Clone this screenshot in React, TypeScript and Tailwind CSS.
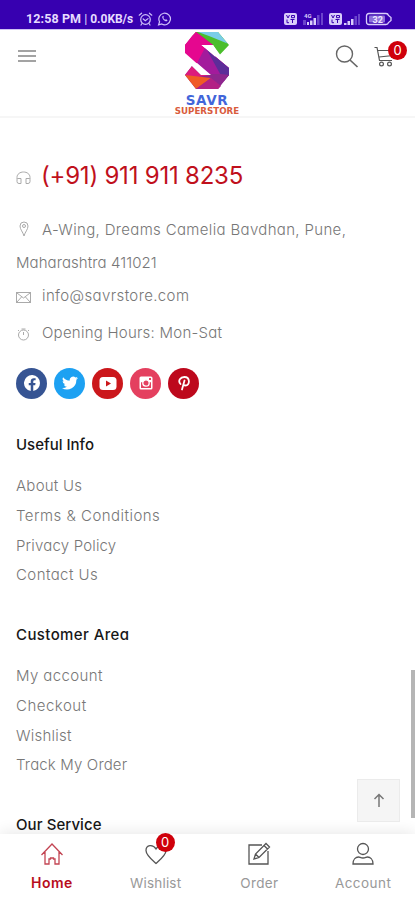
import React from "react";

const font = "font-['Inter','Liberation_Sans',sans-serif] [font-feature-settings:'cv11']";

function StatusBar() {
  return (
    <div className="flex h-[30px] shrink-0 items-start border-b border-[#cfc3f3] bg-[#3700b0] pl-[26px] pr-[22px] pt-[11px] text-[#e6dcff]">
      <span className="flex h-4 w-[110px] items-center whitespace-nowrap font-['Roboto',sans-serif] text-[12.500px] font-bold leading-4 tracking-[0.100px]">
        12:58 PM<span className="px-[3px] font-normal">|</span><span className="text-[12px] tracking-[-0.050px]">0.0KB/s</span>
      </span>
      <svg className="ml-[2px] mt-[1px]" width="15" height="14" viewBox="0 0 15 14" fill="none" stroke="#cfbffa" strokeWidth="1.2" strokeLinecap="round">
        <circle cx="7.5" cy="7.5" r="4.8" /><path d="M1.2 3.2 3.6 1.2M13.8 3.2 11.4 1.2M5.2 7l2.1 1.700L10 6.600M4 11.500 3 13M11 11.500l1 1.500" />
      </svg>
      <svg className="ml-[4px] mt-[1px]" width="15" height="14" viewBox="0 0 15 14" fill="none" stroke="#cfbffa" strokeWidth="1.2">
        <path d="m1.600 12.800 1-3A5.800 5.800 0 1 1 4.800 12z" /><path d="M5.500 4.200c-1.200 1.800 2.200 5.500 4.300 5l.8-1-1.500-1-.9.6C7.100 7.300 6.700 6.700 6.300 5.800l.6-.7-.6-1.300z" fill="#cfbffa" stroke="none" />
      </svg>
      <svg className="ml-auto mt-[1px]" width="110" height="14" viewBox="0 0 110 14">
        <g fill="#d9cdfb">
          <rect x="1" y="1" width="13" height="12" rx="2" /><rect x="46" y="1" width="13" height="12" rx="2" />
          <rect x="24" y="10" width="2" height="3" /><rect x="27" y="8.500" width="2.500" height="4.500" /><rect x="30.500" y="6" width="2.500" height="7" />
          <rect x="61" y="11" width="2.500" height="2" /><rect x="64.500" y="9" width="2.500" height="4" /><rect x="68" y="7" width="2.500" height="6" />
        </g>
        <g fill="#6b43cc"><rect x="20" y="8" width="3" height="5" /><rect x="34" y="3" width="2.500" height="10" /><rect x="38" y="1" width="2" height="12" /><rect x="71.500" y="4" width="2.500" height="9" /><rect x="75" y="2" width="2" height="11" /></g>
        <path d="M3.500 3 5 6l1.500-3M8.500 3.500h3v2.200h-3zM4 7.500v3.200h2M7.500 7.500h4M9.500 7.500v3.500M48.500 3 50 6l1.500-3M53.500 3.500h3v2.200h-3zM49 7.500v3.200h2M52.500 7.500h4M54.500 7.500v3.500" fill="none" stroke="#3700b0" strokeWidth="1" />
        <text x="21" y="5.500" fill="#d9cdfb" fontSize="6" fontWeight="700" fontFamily="Roboto">4G</text>
        <path d="M86 1.500h17q2 0 2.500 2l2.500 2v3l-2.500 2q-.5 2-2.500 2H86q-2.500 0-2.500-2.500V4q0-2.500 2.500-2.500z" fill="none" stroke="#d9cdfb" strokeWidth="1.300" />
        <rect x="86" y="3.500" width="16" height="7" rx="1" fill="#8e70da" />
        <text x="89.500" y="10.500" fill="#eee7ff" fontSize="9" fontWeight="700" fontFamily="Roboto">32</text>
      </svg>
    </div>
  );
}

function Header() {
  return (
    <header className="flex h-[88px] shrink-0 items-start border-b-2 border-[#f6f6f6] bg-white">
      <div className="flex w-[165px] flex-col gap-[3px] pl-[18px] pt-[20px]">
        <span className="h-[2px] w-[18px] bg-[#a3a3a3]" /><span className="h-[2px] w-[18px] bg-[#a3a3a3]" /><span className="h-[2px] w-[18px] bg-[#a3a3a3]" />
      </div>
      <div className="flex w-[84px] flex-col items-center pt-[2px]">
        <svg width="44" height="57" viewBox="0 0 44 57">
          <path d="M11 0h22l11 13-9 9.500L28 13H16.500L7 4.500z" fill="#4abe2c" />
          <path d="M13 0h20l9.500 11.500L24 4z" fill="#7acde8" />
          <path d="M11 0 0 13l5 3 11.500-3H28z" fill="#c2185b" />
          <path d="M11 0 28 13H16.500L44 36v7l-8 9L22 43h3L0 21v-8L7 4z" fill="#e5078f" />
          <path d="M20 16 44 36v7l-6 6L25 43 12 31z" fill="#a31b9c" />
          <path d="M22 18 44 36v7l-5 6z" fill="#5d2d99" />
          <path d="M7 34 0 43l11 14h22l11-14-8-1H16z" fill="#8e268e" />
          <path d="M7 34 0 43l8 3 17-3h-9z" fill="#dc1b7d" />
          <path d="M0 43 26 46 11 57z" fill="#f05a26" />
          <path d="m26 46-15 11h22l3-3z" fill="#b32185" />
          <path d="M16.500 13H28l6 9.500-4 2zM7 34l9 9h10L12 31z" fill="white" />
        </svg>
        <span className="mt-[6px] font-['DejaVu_Sans',sans-serif] text-[13.500px] font-bold leading-[11px] tracking-[0.600px] text-[#4266da]">SAVR</span>
        <span className="whitespace-nowrap font-['DejaVu_Sans',sans-serif] text-[8.700px] font-bold leading-[11px] text-[#d95b3c]">SUPERSTORE</span>
      </div>
      <svg className="ml-[86px] mt-[14px]" width="24" height="25" viewBox="0 0 24 25" fill="none" stroke="#666" strokeWidth="1.400"><circle cx="9.500" cy="10" r="8" /><path d="m15 16 7.500 7" strokeWidth="1.700" /></svg>
      <div className="relative ml-[15px] mt-[15px] h-6 w-8">
        <svg width="24" height="24" viewBox="0 0 24 24" fill="none" stroke="#555" strokeWidth="1.200"><path d="M.5 2.500h2.500l2.500 13H18M4 5.500h15M5 12l14-1.500V6" /><circle cx="7.500" cy="19" r="1.900" /><circle cx="15.500" cy="19" r="1.900" /></svg>
        <Badge className="-top-[4px] left-[14px]" />
      </div>
    </header>
  );
}

function Badge({ className }: { className: string }) {
  return <span className={`absolute flex size-[19px] items-center justify-center rounded-full bg-[#cf000b] text-[13px] leading-none text-white ${className}`}>0</span>;
}

function Contact() {
  const icon = { fill: "none", stroke: "#aaa", strokeWidth: 1 };
  return (
    <section className="text-[15px] font-light text-[#777]">
      <div className="flex h-[34px] items-center">
        <svg className="mt-[5px]" width="15" height="14" viewBox="0 0 15 14" {...icon}><path d="M1 8V6.500C1 3 4 1 7.500 1S14 3 14 6.500V8M1 8.500q0-1 1-1h3v5H3q-2 0-2-2zM14 8.500q0-1-1-1h-3v5h2q2 0 2-2z" /></svg>
        <span className="ml-[10px] mt-[2px] whitespace-nowrap text-[24px] font-normal leading-[34px] tracking-[-0.220px] text-[#c0101c]">(+91) 911 911 8235</span>
      </div>
      <div className="mt-[20px] leading-[33.500px]">
        <div className="flex h-[34px] items-center">
          <svg className="ml-[3px]" width="10" height="16" viewBox="0 0 10 16" {...icon}><path d="M5 15C4 11 1 8.500 1 5a4 4 0 0 1 8 0c0 3.500-3 6-4 10z" /><circle cx="5" cy="5" r="1.500" /></svg>
          <span className="ml-[13px] mt-px whitespace-nowrap tracking-[0.340px]">A-Wing, Dreams Camelia Bavdhan, Pune,</span>
        </div>
        <div className="whitespace-nowrap tracking-[0.080px]">Maharashtra 411021</div>
      </div>
      <div className="flex h-[33px] items-center">
        <svg className="mt-[3px]" width="15" height="11" viewBox="0 0 15 11" {...icon}><rect x=".5" y=".5" width="14" height="10" /><path d="m1 1 6.500 5L14 1M1 10l4.500-5M14 10 9.500 5" /></svg>
        <span className="ml-[11px] tracking-[0.380px]">info@savrstore.com</span>
      </div>
      <div className="mt-[4px] flex h-[33px] items-center">
        <svg className="ml-[1px] mt-[3px]" width="13" height="13" viewBox="0 0 13 13" {...icon}><circle cx="6.500" cy="7" r="5" /><path d="M6.500 4v3M4.500 1h4M1 3l1-1M12 3l-1-1" /></svg>
        <span className="ml-[12px] tracking-[0.240px]">Opening Hours: Mon-Sat</span>
      </div>
    </section>
  );
}

function Socials() {
  return (
    <div className="mt-[18px] flex gap-[7px] [&>span]:flex [&>span]:size-[31px] [&>span]:items-center [&>span]:justify-center [&>span]:rounded-full">
      <span className="bg-[#365493]"><svg width="16" height="16" viewBox="0 0 24 24"><path fill="white" d="M24 12a12 12 0 1 0-13.900 11.900v-8.400H7.100V12h3V9.400c0-3 1.800-4.700 4.600-4.700 1.300 0 2.700.2 2.700.2v3h-1.500c-1.500 0-2 .9-2 1.900V12h3.400l-.5 3.500h-2.900v8.400A12 12 0 0 0 24 12z" /></svg></span>
      <span className="bg-[#1da1f2]"><svg width="16" height="16" viewBox="0 0 24 24"><path fill="white" d="M24 4.600a10 10 0 0 1-2.800.8 5 5 0 0 0 2.100-2.700 10 10 0 0 1-3.100 1.200 4.900 4.900 0 0 0-8.400 4.500A14 14 0 0 1 1.700 3.200a4.900 4.900 0 0 0 1.500 6.500 5 5 0 0 1-2.200-.6 4.900 4.900 0 0 0 3.900 4.900 5 5 0 0 1-2.200.1 4.900 4.900 0 0 0 4.600 3.400A9.900 9.900 0 0 1 0 19.500a14 14 0 0 0 21.500-12.400A10 10 0 0 0 24 4.600z" /></svg></span>
      <span className="bg-[#cb171b]"><svg width="18" height="13" viewBox="0 0 18 13"><rect x=".5" width="17" height="13" rx="3.500" fill="white" /><path d="m7 3.500 5 3-5 3z" fill="#cb171b" /></svg></span>
      <span className="bg-[#e4405f]"><svg width="14" height="14" viewBox="0 0 14 14"><rect x=".5" y=".5" width="13" height="13" rx="1.500" fill="white" /><path d="M2 6.300h2.200a3 3 0 0 0 5.600 0H12V12H2z" fill="#e4405f" /><circle cx="7" cy="7" r="3.200" fill="#e4405f" stroke="white" strokeWidth="1.300" /><rect x="10" y="2" width="2" height="2" fill="#e4405f" /></svg></span>
      <span className="bg-[#bd081c]"><svg width="12" height="15" viewBox="0 0 12 15" fill="none" stroke="white" strokeWidth="1.800" strokeLinecap="round"><path d="M2.500 8C-.5 4.500 2.500 1 6.300 1 12.500 1 12 9.500 7.500 9.500 6.200 9.500 5.500 8.700 5.500 8M6.500 4.500 4 13.500" /></svg></span>
    </div>
  );
}

const TRACKING: Record<string, string> = {
  "Useful Info": "tracking-[0px]",
  "Customer Area": "tracking-[0.400px]",
  "Our Service": "tracking-[0.080px]",
  "About Us": "tracking-[0.250px]",
  "Terms & Conditions": "tracking-[0.470px]",
  "Privacy Policy": "tracking-[0.180px]",
  "Contact Us": "tracking-[0.420px]",
  "My account": "tracking-[0.400px]",
  Checkout: "tracking-[0.500px]",
  Wishlist: "tracking-[0.250px]",
  "Track My Order": "tracking-[0.150px]",
};

function Links({ title, items, className }: { title: string; items: string[]; className: string }) {
  return (
    <section className={className}>
      <h2 className={`text-[15px] font-medium leading-[24px] text-[#171717] ${TRACKING[title]}`}>{title}</h2>
      <ul className="mt-[14px] text-[15px] font-light text-[#777]">
        {items.map((item) => <li key={item} className={`h-[29.750px] whitespace-nowrap leading-[29.750px] ${TRACKING[item]}`}>{item}</li>)}
      </ul>
    </section>
  );
}

function BottomNav() {
  const item = "flex flex-1 flex-col items-center pt-[8px]";
  const s = { width: 24, height: 24, viewBox: "0 0 24 24", fill: "none", strokeWidth: 1.300 };
  const label = "mt-[6px] text-[13.500px] leading-[22px]";
  return (
    <nav className="flex h-[66px] shrink-0 bg-white text-[#999] shadow-[0_-2px_14px_rgba(0,0,0,0.09)]">
      <div className={item}><svg {...s} stroke="#c34553"><path d="m1.500 13 10.500-11 10.500 11M5 10v12h4v-5h1.500v-1h3v1H15v5h4V10" /></svg><span className={`${label} text-[14px] font-semibold tracking-[0.500px] text-[#b80d1d]`}>Home</span></div>
      <div className={item}>
        <div className="relative"><svg {...s} stroke="#555"><path d="M12 21.500C7 17 2 13 2 8.500 2 2.500 9 2 12 7c3-5 10-4.500 10 1.500 0 4.500-5 8.500-10 13z" /></svg><Badge className="-top-[9px] left-[12px]" /></div>
        <span className={`${label} tracking-[0.200px]`}>Wishlist</span>
      </div>
      <div className={item}><svg {...s} stroke="#555"><path d="M15 3H2v19h19V9M7 17l1.500-5L19 1.500l3.500 3.500L12 15.500zM17 3.500 20.500 7M8.500 12l3.500 3.500" /></svg><span className={`${label} tracking-[0.350px]`}>Order</span></div>
      <div className={item}><svg {...s} stroke="#555"><circle cx="12" cy="7" r="5.500" /><path d="M2 22c0-5 3-7 5.500-7 1.500 0 2 1 4.500 1s3-1 4.500-1C19 15 22 17 22 22z" /></svg><span className={`${label} tracking-[0.450px]`}>Account</span></div>
    </nav>
  );
}

export default function App() {
  return (
    <div className={`relative flex h-[900px] w-[415px] flex-col overflow-hidden bg-white ${font}`}>
      <StatusBar />
      <Header />
      <main className="min-h-0 flex-1 overflow-hidden px-4 pt-[40px]">
        <Contact />
        <Socials />
        <Links className="mt-[34.500px]" title="Useful Info" items={["About Us", "Terms & Conditions", "Privacy Policy", "Contact Us"]} />
        <Links className="mt-[33px]" title="Customer Area" items={["My account", "Checkout", "Wishlist", "Track My Order"]} />
        <Links className="mt-[33px]" title="Our Service" items={[]} />
      </main>
      <BottomNav />
      <button className="absolute left-[357px] top-[779px] flex size-[43px] items-center justify-center border border-[#ebebeb] bg-[#f5f5f5]">
        <svg width="12" height="15" viewBox="0 0 12 15" fill="none" stroke="#777" strokeWidth="1.500"><path d="M6 14V2M1.500 6 6 1.500 10.500 6" /></svg>
      </button>
      <div className="absolute right-0 top-[670px] h-[148px] w-[4px] bg-[#b5b5b5]" />
    </div>
  );
}
